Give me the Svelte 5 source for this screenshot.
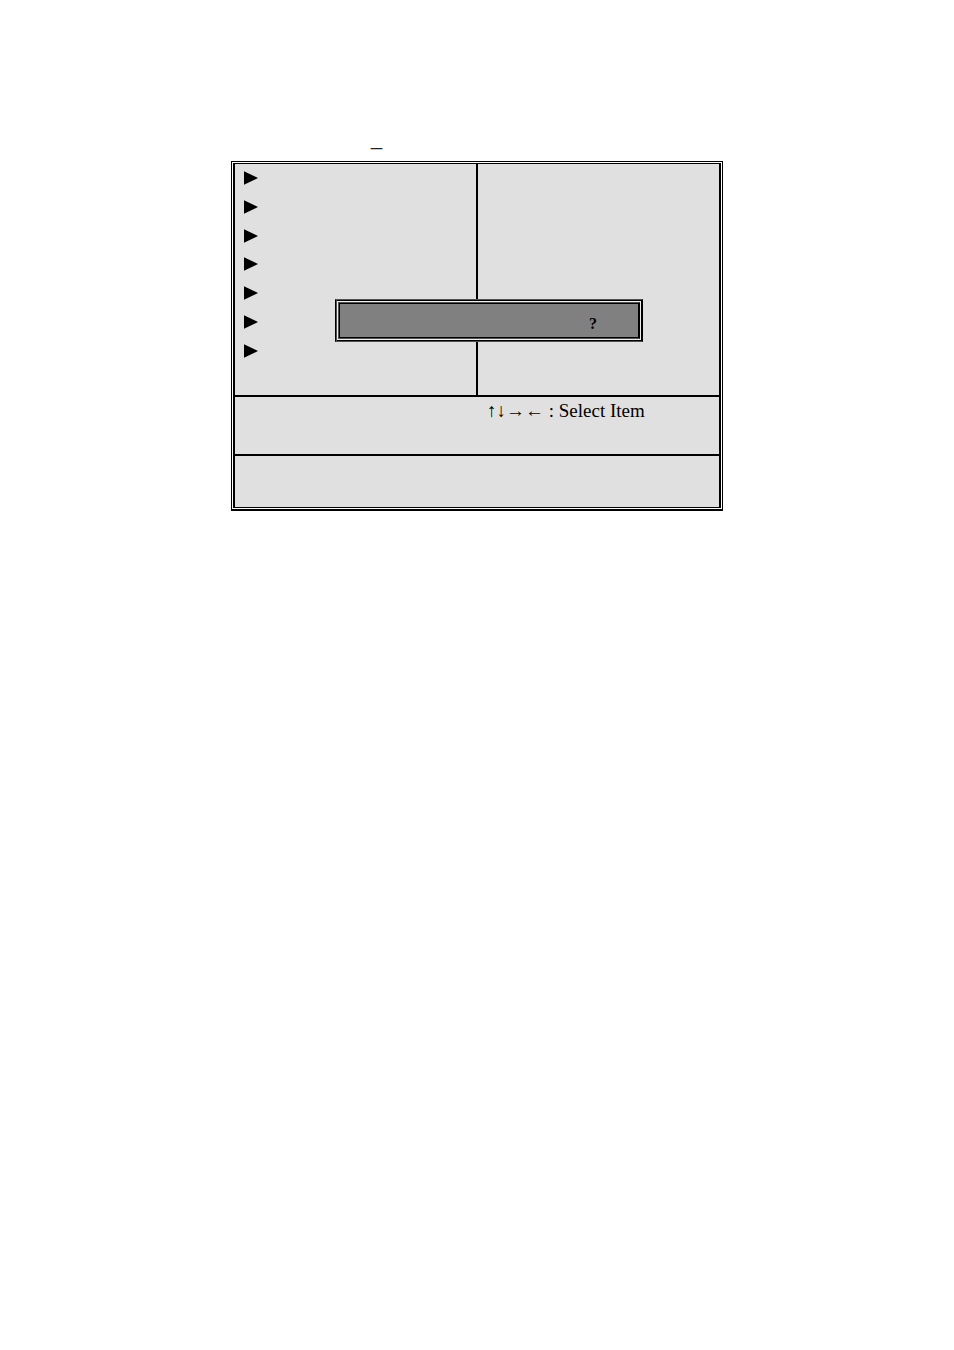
<script>
  const menuRows = [1, 2, 3, 4, 5, 6, 7];
</script>

<main>
  <div class="title">_</div>

  <div class="frame">
    <div class="screen">
      <div class="panes">
        <ul class="menu">
          {#each menuRows as row (row)}
            <li>
              <svg width="14" height="14" viewBox="0 0 14 14" aria-hidden="true">
                <path d="M0 0.2 L14 7 L0 13.8 Z" />
              </svg>
            </li>
          {/each}
        </ul>
        <div class="divider"></div>
        <div class="detail"></div>
      </div>
      <div class="keys">
        <span class="hint">↑↓→← : Select Item</span>
      </div>
      <div class="status"></div>
    </div>

    <div class="dialog" role="dialog" aria-label="Confirm">
      <div class="message">?</div>
    </div>
  </div>
</main>

<style>
  :global(body) {
    background: #fff;
  }

  main {
    box-sizing: border-box;
    max-width: 492px;
    margin: 0 auto;
    padding-top: 126px;
    color: #000;
    font-family: "Liberation Serif", "Times New Roman", serif;
    font-size: 19px;
  }

  .title {
    height: 35px;
    padding-left: 140px;
    font-family: "Liberation Sans", Arial, sans-serif;
    font-size: 20px;
    line-height: 24px;
    color: #222;
  }

  .frame {
    position: relative;
    border: 1px solid #000;
    border-bottom-width: 2px;
    padding: 1px;
    background: #fff;
  }

  .screen {
    border: 2px solid #000;
    border-top-width: 1px;
    border-bottom-width: 1px;
    background: #e0e0e0;
  }

  .panes {
    display: grid;
    grid-template-columns: 1fr 2px 1fr;
    height: 231px;
    border-bottom: 2px solid #000;
  }

  .divider {
    background: #000;
  }

  .menu {
    display: grid;
    grid-auto-rows: 1fr;
    margin: 0;
    padding: 0 0 30px 9px;
    list-style: none;
  }

  .menu li {
    display: flex;
    align-items: center;
  }

  .keys {
    box-sizing: border-box;
    display: grid;
    grid-template-columns: 1fr 1fr;
    height: 59px;
    padding-top: 3px;
    border-bottom: 2px solid #000;
  }

  .hint {
    grid-column: 2;
    padding-left: 10px;
    line-height: 22px;
    white-space: nowrap;
  }

  .status {
    height: 51px;
  }

  /* confirmation box lying over both panes */
  .dialog {
    box-sizing: border-box;
    position: absolute;
    top: 137px;
    left: 103px;
    width: 308px;
    height: 43px;
    padding: 2px;
    border: 1px solid #000;
    border-top-color: #505050;
    border-bottom-color: #505050;
    background: #eee;
    box-shadow: inset 1px 0 0 #505050, inset 0 0 0 1px #000;
  }

  .message {
    box-sizing: border-box;
    height: 100%;
    padding-right: 42px;
    border: 1px solid #505050;
    border-right-color: #000;
    background: #808080;
    box-shadow: inset 0 0 0 1px #000;
    font-size: 16px;
    font-weight: bold;
    line-height: 42px;
    text-align: right;
  }
</style>
